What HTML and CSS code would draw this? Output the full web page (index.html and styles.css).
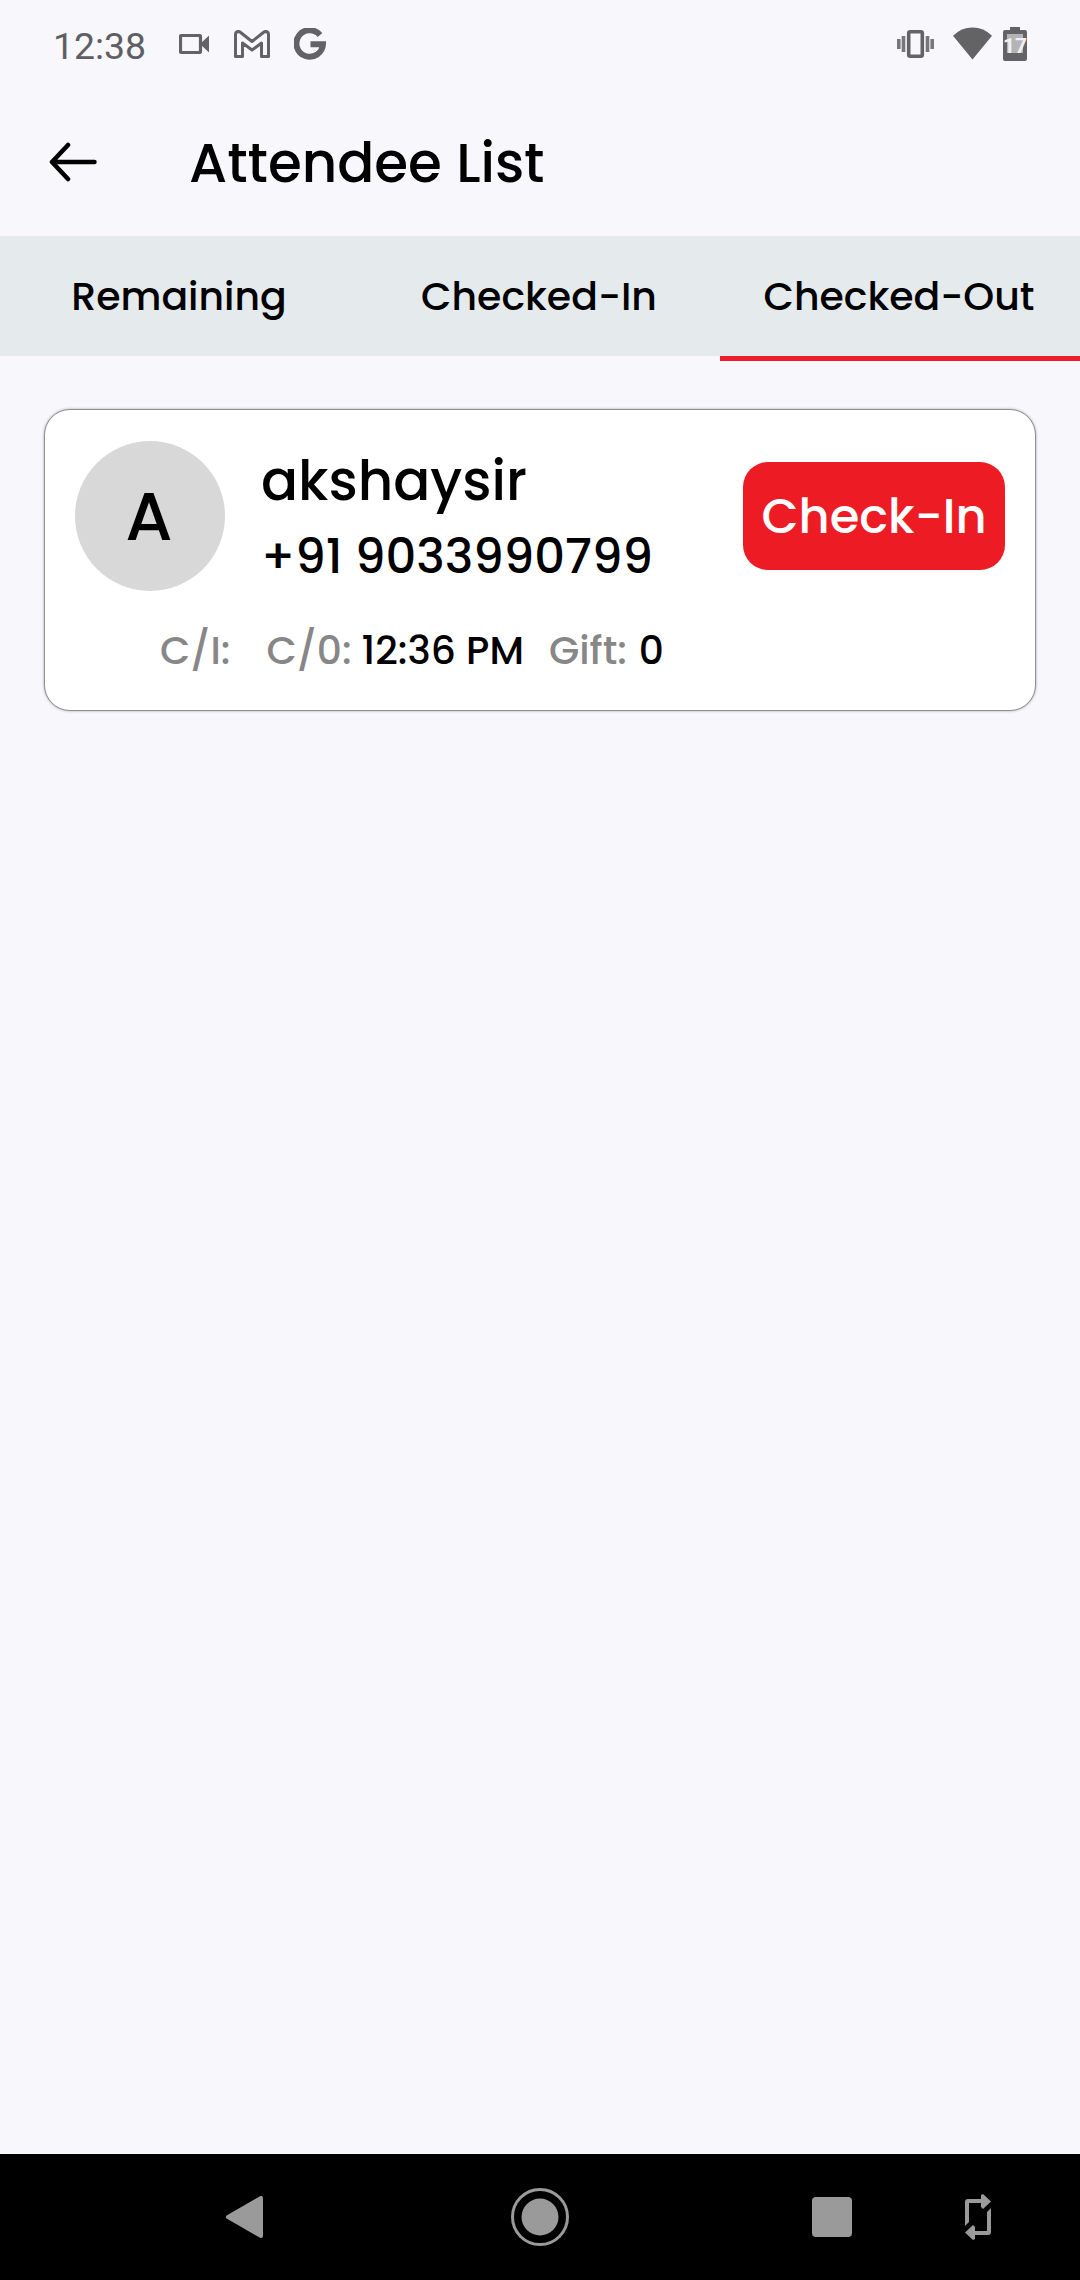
FILE: index.html
```html
<!DOCTYPE html>
<html lang="en">
<head>
    <meta charset="UTF-8">
    <meta name="viewport" content="width=device-width, initial-scale=1.0">
    <title>Attendee List</title>
    <link rel="stylesheet" href="styles.css">
</head>
<body>
    <div class="status-bar">
        <span class="time">12:38</span>
        <svg class="icon-camera" width="30" height="20" viewBox="0 0 30 20">
            <rect x="1.5" y="1.5" width="20" height="17" rx="1" fill="none" stroke="#636366" stroke-width="3.2"/>
            <path d="M21 10l9-8.500v17z" fill="#636366"/>
        </svg>
        <svg class="icon-mail" width="36" height="28" viewBox="0 0 36 28">
            <path d="M1.5 4.5Q1.5 1.5 4.5 1.5L6 2L18 11.5L30 2L31.5 1.5Q34.5 1.5 34.5 4.5V26.5H27.5V13L18 20L8.500 13V26.5H1.5Z" fill="none" stroke="#636366" stroke-width="3" stroke-linejoin="round"/>
        </svg>
        <svg class="icon-google" width="32" height="33" viewBox="0 0 32 33">
            <path d="M26 7A13.3 13.3 0 1 0 29 16.2H16.5" fill="none" stroke="#636366" stroke-width="6"/>
        </svg>
        <div class="status-right">
            <svg width="37" height="28" viewBox="0 0 37 28">
                <rect x="11.7" y="1.8" width="13.6" height="24.4" rx="1.5" fill="none" stroke="#636366" stroke-width="3.6"/>
                <path d="M6.5 6v16M30.5 6v16M1.8 9v10M35.2 9v10" stroke="#77777a" stroke-width="3.6"/>
            </svg>
            <svg class="icon-wifi" width="39" height="33" viewBox="0 0 40 33">
                <path d="M20 33L0 8.5Q8.5 0 20 0T40 8.5Z" fill="#636366"/>
            </svg>
            <svg class="icon-battery" width="24" height="34" viewBox="0 0 24 34">
                <path d="M7 0H17V3H22Q24 3 24 5V32Q24 34 22 34H2Q0 34 0 32V5Q0 3 2 3H7Z" fill="#636366"/>
                <path d="M4 7H20V26H4Z" fill="#b4b4b7"/>
                <text x="12" y="26" text-anchor="middle" class="battery-level">17</text>
            </svg>
        </div>
    </div>

    <div class="header">
        <svg width="48" height="40" viewBox="0 0 48 40">
            <path d="M45.5 20H3M19 3L3 20L19 37" fill="none" stroke="#000" stroke-width="4.5" stroke-linecap="round" stroke-linejoin="round"/>
        </svg>
        <h1>Attendee List</h1>
    </div>

    <div class="tabs">
        <div class="tab">Remaining</div>
        <div class="tab">Checked-In</div>
        <div class="tab active">Checked-Out</div>
    </div>

    <div class="content">
        <div class="card">
            <div class="card-top">
                <div class="avatar">A</div>
                <div class="info">
                    <div class="name">akshaysir</div>
                    <div class="phone">+91 9033990799</div>
                </div>
                <button class="check-in">Check-In</button>
            </div>
            <div class="meta">
                <span class="label">C/I:</span>
                <span class="label co">C/0:</span>
                <span class="value out-time">12:36 PM</span>
                <span class="label gift">Gift:</span>
                <span class="value">0</span>
            </div>
        </div>
    </div>

    <div class="nav-bar">
        <svg class="nav-back" width="37" height="42" viewBox="0 0 37 42">
            <path d="M2 21L35 2V40Z" fill="#9a9a9a" stroke="#9a9a9a" stroke-width="4" stroke-linejoin="round"/>
        </svg>
        <svg class="nav-home" width="58" height="58" viewBox="0 0 58 58">
            <circle cx="29" cy="29" r="27.5" fill="none" stroke="#9a9a9a" stroke-width="3"/>
            <circle cx="29" cy="29" r="18.5" fill="#9a9a9a"/>
        </svg>
        <div class="nav-recent"></div>
        <svg class="nav-rotate" width="26" height="46" viewBox="0 0 26 46">
            <path d="M0 32V8Q0 5 3 5H16V1L18 0L26 7.5L18 15L16 13V9H4V28Z" fill="#9a9a9a"/>
            <path d="M26 14V38Q26 41 23 41H10V45L8 46L0 38.5L8 31L10 33V37H22V18Z" fill="#9a9a9a"/>
        </svg>
    </div>
</body>
</html>
```
FILE: styles.css
```css
* {
    box-sizing: border-box;
}

body {
    font-family: Poppins, Inter, sans-serif;
    font-weight: 500;
    background-color: #f7f7fc;
    color: #000;
    margin: 0;
    display: flex;
    flex-direction: column;
    height: 100vh;
}

.status-bar {
    display: flex;
    align-items: center;
    height: 88px;
    padding: 0 53px;
}

.time {
    width: 93px;
    font-family: Roboto, sans-serif;
    font-weight: 400;
    font-size: 37.4px;
    color: #5f5f63;
    margin-top: 4px;
}

.icon-camera {
    margin-left: 33px;
}

.icon-mail {
    margin-left: 25px;
}

.icon-google {
    margin: 1px 0 0 24px;
}

.status-right {
    display: flex;
    align-items: center;
    margin-left: auto;
}

.icon-wifi {
    margin: -1px 0 0 19px;
}

.icon-battery {
    margin-left: 11px;
}

.battery-level {
    font: 700 21px Roboto, sans-serif;
    fill: #f0f0f4;
}

.header {
    display: flex;
    align-items: center;
    height: 148px;
    padding-left: 49px;
}

.header h1 {
    font-size: 54.75px;
    font-weight: 500;
    margin: 2px 0 0 92px;
}

.tabs {
    display: grid;
    grid-template-columns: repeat(3, 1fr);
    height: 120px;
    background-color: #e5eaed;
    font-size: 39.4px;
}

.tab {
    display: flex;
    align-items: center;
    justify-content: center;
    padding-right: 2px;
}

.tab.active {
    box-shadow: 0 5px 0 #ed1c2b;
}

.content {
    flex-grow: 1;
    padding: 53px 44px;
}

.card {
    height: 302px;
    padding: 31px 30px 0;
    background-color: #fff;
    border: 1px solid #8e8e93;
    border-radius: 26px;
    box-shadow: 0 0 3px rgba(0, 0, 0, 0.3);
}

.card-top {
    display: flex;
    height: 154px;
}

.avatar {
    display: flex;
    align-items: center;
    justify-content: center;
    width: 150px;
    height: 150px;
    padding: 2px 2px 0 0;
    border-radius: 50%;
    background-color: #d8d8d8;
    font-size: 68px;
}

.info {
    margin: 2px 0 0 36px;
    line-height: 76px;
}

.name {
    font-size: 54.75px;
}

.phone {
    font-size: 48px;
}

.check-in {
    width: 262px;
    height: 108px;
    margin: 21px 0 0 auto;
    padding: 2px 0 0;
    border: none;
    border-radius: 25px;
    background-color: #ed1c24;
    color: #fff;
    font: inherit;
    font-size: 48px;
}

.meta {
    display: flex;
    margin: 29px 0 0 85px;
    font-size: 39.2px;
    line-height: 54px;
}

.label {
    color: #878787;
}

.co {
    margin-left: 36px;
}

.out-time {
    margin-left: 10px;
}

.gift {
    margin-left: 25px;
}

.gift + .value {
    margin-left: 12px;
}

.nav-bar {
    display: flex;
    align-items: center;
    height: 126px;
    padding-left: 226px;
    background-color: #000;
}

.nav-home {
    margin-left: 248px;
}

.nav-recent {
    width: 40px;
    height: 40px;
    margin-left: 243px;
    border-radius: 4px;
    background-color: #9a9a9a;
}

.nav-rotate {
    margin-left: 113px;
}
```
